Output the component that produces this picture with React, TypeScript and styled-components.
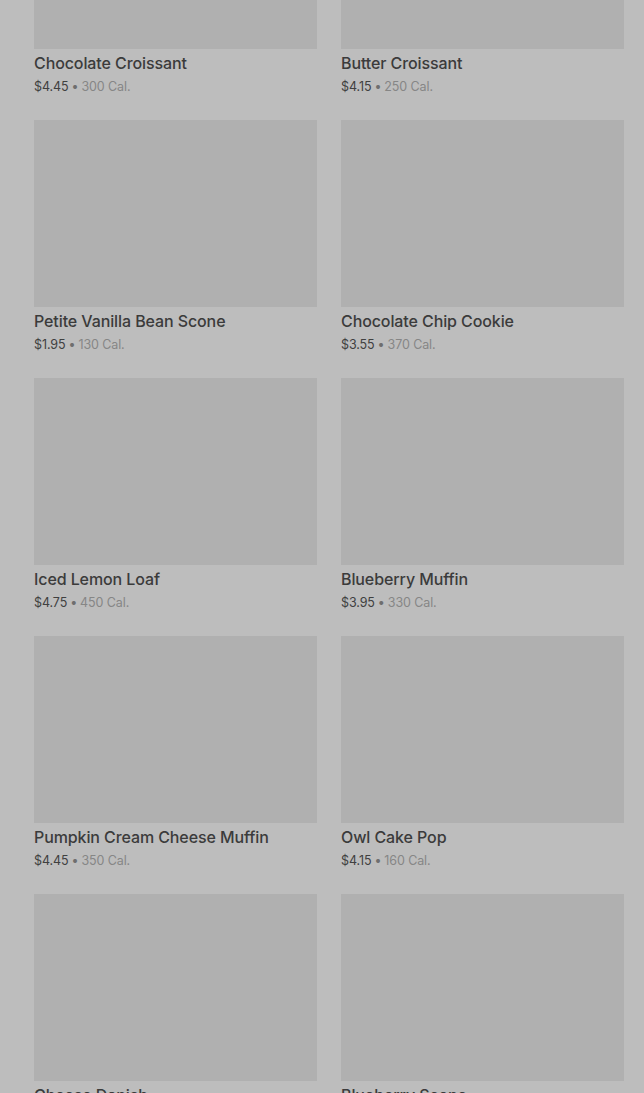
import { createGlobalStyle, styled } from 'styled-components'

type Item = { name: string; price: string; cal: number }

const items: Item[] = [
    { name: 'Chocolate Croissant', price: '$4.45', cal: 300 },
    { name: 'Butter Croissant', price: '$4.15', cal: 250 },
    { name: 'Petite Vanilla Bean Scone', price: '$1.95', cal: 130 },
    { name: 'Chocolate Chip Cookie', price: '$3.55', cal: 370 },
    { name: 'Iced Lemon Loaf', price: '$4.75', cal: 450 },
    { name: 'Blueberry Muffin', price: '$3.95', cal: 330 },
    { name: 'Pumpkin Cream Cheese Muffin', price: '$4.45', cal: 350 },
    { name: 'Owl Cake Pop', price: '$4.15', cal: 160 },
    { name: 'Cheese Danish', price: '$3.45', cal: 290 },
    { name: 'Blueberry Scone', price: '$3.65', cal: 380 },
]

const GlobalStyle = createGlobalStyle`
    html, body {
        margin: 0;
        padding: 0;
        background: #bdbdbd;
        overflow: hidden;
    }
    body {
        font-family: Inter, "Noto Sans", sans-serif;
    }
`

export default function App() {
    return (
        <>
            <GlobalStyle />
            <Viewport>
                <Grid>
                    {items.map(item => (
                        <Card key={item.name}>
                            <Thumb />
                            <Name>{item.name}</Name>
                            <Meta>
                                {item.price}
                                <Dot>•</Dot>
                                <Cal>{item.cal} Cal.</Cal>
                            </Meta>
                        </Card>
                    ))}
                </Grid>
            </Viewport>
        </>
    )
}

const Viewport = styled.div`
    height: 1093px;
    overflow: hidden;
    background: #bdbdbd;
`

// page is scrolled down, the first row is cut at the top
const Grid = styled.div`
    display: grid;
    grid-template-columns: 283px 283px;
    column-gap: 24px;
    row-gap: 23px;
    padding: 0 20px 0 34px;
    margin-top: -138px;
`

const Card = styled.div`
    display: flex;
    flex-direction: column;
`

const Thumb = styled.div`
    height: 187px;
    background: #b0b0b0;
    margin-bottom: 3px;
`

const Name = styled.div`
    font-size: 16px;
    font-weight: 500;
    line-height: 22px;
    color: #3b3b3b;
    letter-spacing: -0.1px;
`

const Meta = styled.div`
    margin-top: 3px;
    font-size: 12.5px;
    line-height: 20px;
    color: #404040;
    letter-spacing: -0.1px;
`

const Dot = styled.span`
    margin: 0 3px;
    color: #6e6e6e;
`

const Cal = styled.span`
    color: #868686;
`
